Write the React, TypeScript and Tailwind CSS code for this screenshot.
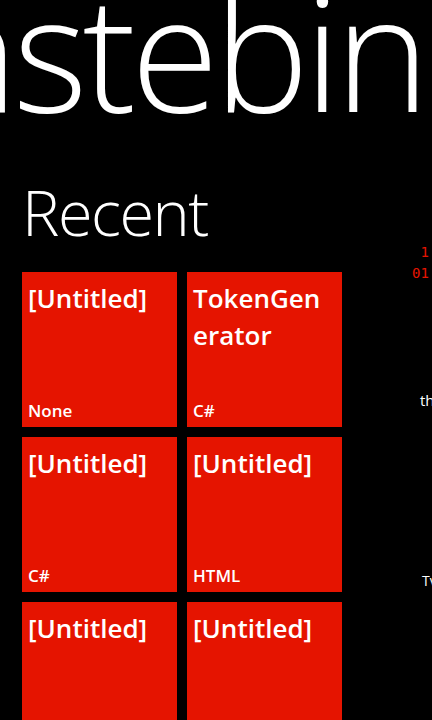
const tiles = [
  { title: 'Untitled', lang: 'None' },
  { title: 'TokenGenerator', lang: 'C#' },
  { title: 'Untitled', lang: 'C#' },
  { title: 'Untitled', lang: 'HTML' },
  { title: 'Untitled', lang: '' },
  { title: 'Untitled', lang: '' },
];

function Tile({ title, lang }: { title: string; lang: string }) {
  const label =
    title === 'TokenGenerator' ? (
      <>
        TokenGen
        <wbr />
        erator
      </>
    ) : (
      `[${title}]`
    );
  return (
    <div className="flex h-[155px] w-[155px] flex-col justify-between bg-[#e51400] px-[6px] pb-[6px] pt-[8px]">
      <div className="text-[26px] font-semibold leading-[37px]">{label}</div>
      <div className="text-[17px] font-semibold leading-[20px]">{lang}</div>
    </div>
  );
}

export default function App() {
  return (
    <div
      className="h-[720px] w-[432px] overflow-hidden bg-black text-white"
      style={{ fontFamily: '"Open Sans", "Noto Sans", sans-serif' }}
    >
      {/* Panorama title, scrolled so "pa" is off screen */}
      <div className="h-[172px] overflow-hidden whitespace-nowrap">
        <h1 className="-ml-[157px] -mt-[30px] text-[160px] font-light leading-[160px] tracking-[-5px]">
          pastebin
        </h1>
      </div>

      <div className="flex">
        <section className="w-[410px] shrink-0 pl-[22px]">
          <h2 className="mb-[20px] text-[63px] font-light leading-[80px] tracking-[-1.5px]">Recent</h2>
          <div className="grid w-fit grid-cols-2 gap-[10px]">
            {tiles.map((t, i) => (
              <Tile key={i} title={t.title} lang={t.lang} />
            ))}
          </div>
        </section>

        {/* Next panorama item peeking in */}
        <section className="w-[200px] shrink-0 pl-[2px]">
          <div
            className="mt-[70px] whitespace-pre text-[14px] leading-[21px] text-[#e51400]"
            style={{ fontFamily: '"DejaVu Sans Mono", monospace' }}
          >
            {' 1\n01'}
          </div>
          <div className="mt-[106px] pl-[8px] text-[15px] leading-[20px]">th</div>
          <div className="mt-[161px] pl-[10px] text-[14px] leading-[20px]">Tv</div>
        </section>
      </div>
    </div>
  );
}
